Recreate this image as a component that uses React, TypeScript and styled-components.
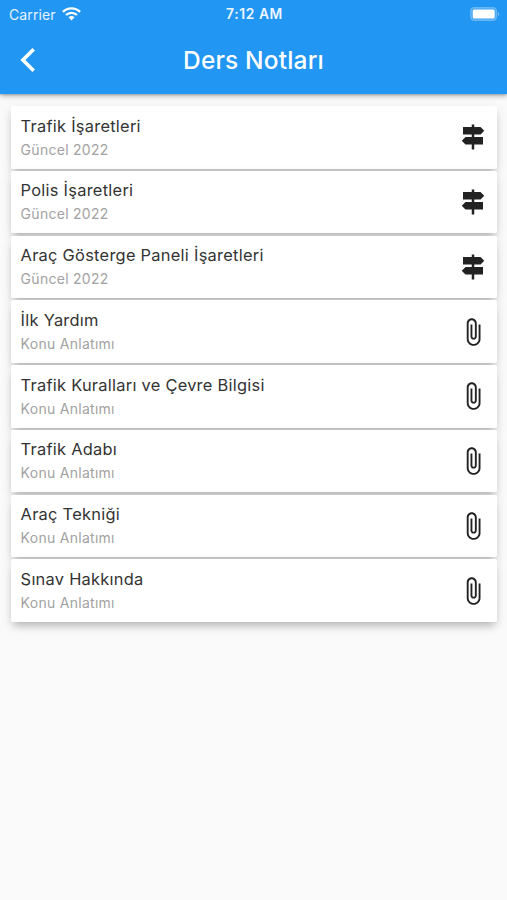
import React from "react";
import styled, { createGlobalStyle } from "styled-components";

const GlobalStyle = createGlobalStyle`
  * { box-sizing: border-box; }
  body { margin: 0; background: #fafafa; font-family: Inter, "Noto Sans", sans-serif; }
`;

const Screen = styled.div`
  min-height: 900px;
  background: #fafafa;
`;

const Header = styled.header`
  height: 94px;
  background: #2196f3;
  color: #fff;
  box-shadow: 0 2px 5px rgba(0, 0, 0, 0.28), 0 1px 2px rgba(0, 0, 0, 0.16);
`;

const StatusBar = styled.div`
  height: 27px;
  display: grid;
  grid-template-columns: 1fr auto 1fr;
  align-items: center;
  padding: 0 7px 0 9px;
`;

const Carrier = styled.div`
  display: flex;
  align-items: center;
  gap: 6px;
  font-size: 14px;
  line-height: 27px;
  letter-spacing: 0.1px;
  color: #e6f3fe;
`;

const Clock = styled.div`
  padding-top: 1px;
  font-size: 13.8px;
  font-weight: 600;
  line-height: 27px;
  letter-spacing: 0.6px;
  color: #eef7ff;
`;

const BatterySlot = styled.div`
  display: flex;
  justify-content: flex-end;
`;

const NavBar = styled.div`
  height: 65px;
  display: grid;
  grid-template-columns: 56px 1fr 56px;
  align-items: center;
`;

const BackButton = styled.button`
  display: flex;
  align-items: center;
  width: 56px;
  height: 56px;
  padding: 0 0 0 19px;
  border: 0;
  background: none;
  color: inherit;
`;

const Title = styled.h1`
  margin: 0;
  text-align: center;
  font-size: 24.5px;
  font-weight: 500;
  line-height: 32px;
  letter-spacing: 0.15px;
`;

const List = styled.main`
  display: flex;
  flex-direction: column;
  gap: 2.2px;
  padding: 12.2px 10px 0 11px;
`;

const Row = styled.div`
  display: flex;
  align-items: center;
  justify-content: space-between;
  height: 62.55px;
  padding: 0 9px 0 9.6px;
  border-radius: 1.5px;
  background: #fff;
  box-shadow: 0 6px 8px -3px rgba(0, 0, 0, 0.2), 0 4px 11px rgba(0, 0, 0, 0.12);
`;

const RowText = styled.div`
  display: flex;
  flex-direction: column;
  padding-top: 0.6px;
`;

const RowTitle = styled.div`
  font-size: 16.4px;
  line-height: 22px;
  letter-spacing: 0.27px;
  color: #333;
`;

const RowSubtitle = styled.div`
  margin-top: 2px;
  font-size: 14px;
  line-height: 22px;
  letter-spacing: 0.28px;
  color: #a2a2a2;
`;

const Glyph = styled.svg`
  display: block;
  width: 30px;
  height: 30px;
  fill: #222;
`;

const icons = {
  sign: "M13 10h5l3-3-3-3h-5V2h-2v2H4v6h7v2H6l-3 3 3 3h5v4h2v-4h7v-6h-7v-2z",
  clip: "M16.5 6v11.5c0 2.21-1.79 4-4 4s-4-1.79-4-4V5c0-1.38 1.12-2.5 2.5-2.5s2.5 1.12 2.5 2.5v10.5c0 .55-.45 1-1 1s-1-.45-1-1V6H10v9.5c0 1.38 1.12 2.5 2.5 2.5s2.5-1.12 2.5-2.5V5c0-2.21-1.79-4-4-4S7 2.79 7 5v12.5c0 3.04 2.46 5.5 5.5 5.5s5.5-2.46 5.5-5.5V6h-1.5z",
};

type Note = { title: string; subtitle: string; icon: keyof typeof icons };

const notes: Note[] = [
  { title: "Trafik İşaretleri", subtitle: "Güncel 2022", icon: "sign" },
  { title: "Polis İşaretleri", subtitle: "Güncel 2022", icon: "sign" },
  { title: "Araç Gösterge Paneli İşaretleri", subtitle: "Güncel 2022", icon: "sign" },
  { title: "İlk Yardım", subtitle: "Konu Anlatımı", icon: "clip" },
  { title: "Trafik Kuralları ve Çevre Bilgisi", subtitle: "Konu Anlatımı", icon: "clip" },
  { title: "Trafik Adabı", subtitle: "Konu Anlatımı", icon: "clip" },
  { title: "Araç Tekniği", subtitle: "Konu Anlatımı", icon: "clip" },
  { title: "Sınav Hakkında", subtitle: "Konu Anlatımı", icon: "clip" },
];

const WifiIcon = () => (
  <svg width="19" height="15" viewBox="0 0 19 15" fill="none" stroke="#fff" strokeWidth="2.4">
    <path d="M.9 4.8C5.7.2 13.3.2 18.1 4.8" />
    <path d="M4 8c3-2.9 8-2.9 11 0" />
    <path d="M6.5 10.3c1.7-1.6 4.3-1.6 6 0l-3 3.2z" fill="#fff" stroke="none" />
  </svg>
);

const BatteryIcon = () => (
  <svg width="30" height="14" viewBox="0 0 30 14">
    <rect x="0.8" y="0.7" width="25.6" height="12.6" rx="3.5" fill="#fff" fillOpacity="0.12" stroke="#fff" strokeOpacity="0.3" strokeWidth="1.4" />
    <rect x="2.7" y="2.5" width="22" height="9" rx="1.6" fill="#fff" />
    <path d="M27.9 4.9v4.2c1.8-.8 1.8-3.4 0-4.2z" fill="#fff" fillOpacity="0.45" />
  </svg>
);

export default function App() {
  return (
    <Screen>
      <GlobalStyle />
      <Header>
        <StatusBar>
          <Carrier>
            Carrier
            <WifiIcon />
          </Carrier>
          <Clock>7:12 AM</Clock>
          <BatterySlot>
            <BatteryIcon />
          </BatterySlot>
        </StatusBar>
        <NavBar>
          <BackButton aria-label="Geri">
            <svg width="18" height="26" viewBox="0 0 18 26" fill="none" stroke="#fff" strokeWidth="3.6">
              <path d="M14.7 2.2 3.9 13l10.8 10.8" />
            </svg>
          </BackButton>
          <Title>Ders Notları</Title>
        </NavBar>
      </Header>
      <List>
        {notes.map((note) => (
          <Row key={note.title}>
            <RowText>
              <RowTitle>{note.title}</RowTitle>
              <RowSubtitle>{note.subtitle}</RowSubtitle>
            </RowText>
            <Glyph viewBox="0 0 24 24">
              <path d={icons[note.icon]} />
            </Glyph>
          </Row>
        ))}
      </List>
    </Screen>
  );
}
